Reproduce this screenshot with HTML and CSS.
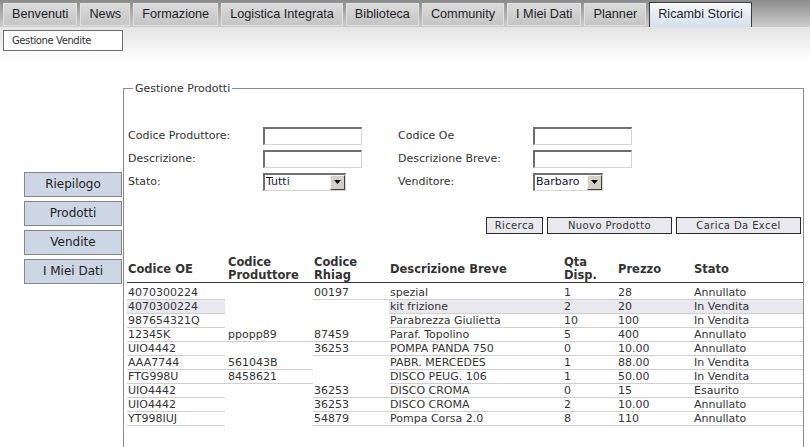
FILE: index.html
```html
<!DOCTYPE html>
<html lang="it">
<head>
<meta charset="utf-8">
<title>Ricambi Storici - Gestione Prodotti</title>
<link rel="stylesheet" href="styles.css">
</head>
<body>
<div class="topbar">
  <ul class="tabs">
    <li class="tab">Benvenuti</li>
    <li class="tab">News</li>
    <li class="tab">Formazione</li>
    <li class="tab">Logistica Integrata</li>
    <li class="tab">Biblioteca</li>
    <li class="tab">Community</li>
    <li class="tab">I Miei Dati</li>
    <li class="tab">Planner</li>
    <li class="tab active">Ricambi Storici</li>
  </ul>
</div>
<div class="subbar">
  <div class="subtab">Gestione Vendite</div>
</div>
<div class="main">
  <nav class="side">
    <div class="sidebtn">Riepilogo</div>
    <div class="sidebtn">Prodotti</div>
    <div class="sidebtn">Vendite</div>
    <div class="sidebtn">I Miei Dati</div>
  </nav>
  <fieldset class="panel">
    <legend class="legend">Gestione Prodotti</legend>
    <table class="form">
      <tr>
        <td class="lbl lbl1">Codice Produttore:</td>
        <td class="fld"><input class="txt" type="text"></td>
        <td class="lbl lbl2">Codice Oe</td>
        <td class="fld"><input class="txt" type="text"></td>
      </tr>
      <tr>
        <td class="lbl lbl1">Descrizione:</td>
        <td class="fld"><input class="txt" type="text"></td>
        <td class="lbl lbl2">Descrizione Breve:</td>
        <td class="fld"><input class="txt" type="text"></td>
      </tr>
      <tr>
        <td class="lbl lbl1">Stato:</td>
        <td class="fld"><span class="sel sel-stato"><span class="sel-val">Tutti</span><span class="sel-btn"><svg width="7" height="4" viewBox="0 0 7 4"><path d="M0 0H7L3.5 4Z" fill="#000"/></svg></span></span></td>
        <td class="lbl lbl2">Venditore:</td>
        <td class="fld"><span class="sel sel-vend"><span class="sel-val">Barbaro</span><span class="sel-btn"><svg width="7" height="4" viewBox="0 0 7 4"><path d="M0 0H7L3.5 4Z" fill="#000"/></svg></span></span></td>
      </tr>
    </table>
    <div class="actions">
      <button class="btn btn-ricerca" type="button">Ricerca</button>
      <button class="btn btn-wide" type="button">Nuovo Prodotto</button>
      <button class="btn btn-wide" type="button">Carica Da Excel</button>
    </div>
    <table class="grid">
      <colgroup>
        <col class="c1"><col class="c2"><col class="c3"><col class="c4"><col class="c5"><col class="c6"><col class="c7">
      </colgroup>
      <thead>
        <tr>
          <th>Codice OE</th>
          <th class="prod">Codice<br>Produttore</th>
          <th>Codice<br>Rhiag</th>
          <th>Descrizione Breve</th>
          <th>Qta<br>Disp.</th>
          <th>Prezzo</th>
          <th>Stato</th>
        </tr>
      </thead>
      <tbody>
        <tr class="first"><td>4070300224</td><td class="prod"></td><td>00197</td><td>spezial</td><td>1</td><td>28</td><td>Annullato</td></tr>
        <tr class="hl"><td>4070300224</td><td class="prod"></td><td></td><td>kit frizione</td><td>2</td><td>20</td><td>In Vendita</td></tr>
        <tr><td>987654321Q</td><td class="prod"></td><td></td><td>Parabrezza Giulietta</td><td>10</td><td>100</td><td>In Vendita</td></tr>
        <tr><td>12345K</td><td class="prod">ppopp89</td><td>87459</td><td>Paraf. Topolino</td><td>5</td><td>400</td><td>Annullato</td></tr>
        <tr><td>UIO4442</td><td class="prod"></td><td>36253</td><td>POMPA PANDA 750</td><td>0</td><td>10.00</td><td>Annullato</td></tr>
        <tr><td>AAA7744</td><td class="prod">561043B</td><td></td><td>PABR. MERCEDES</td><td>1</td><td>88.00</td><td>In Vendita</td></tr>
        <tr><td>FTG998U</td><td class="prod">8458621</td><td></td><td>DISCO PEUG. 106</td><td>1</td><td>50.00</td><td>In Vendita</td></tr>
        <tr><td>UIO4442</td><td class="prod"></td><td>36253</td><td>DISCO CROMA</td><td>0</td><td>15</td><td>Esaurito</td></tr>
        <tr><td>UIO4442</td><td class="prod"></td><td>36253</td><td>DISCO CROMA</td><td>2</td><td>10.00</td><td>Annullato</td></tr>
        <tr><td>YT998IUJ</td><td class="prod"></td><td>54879</td><td>Pompa Corsa 2.0</td><td>8</td><td>110</td><td>Annullato</td></tr>
      </tbody>
    </table>
  </fieldset>
</div>
</body>
</html>
```
FILE: styles.css
```css
html, body {
  margin: 0;
  padding: 0;
  background: #fff;
}
body {
  width: 810px;
  font-family: "DejaVu Sans", Verdana, sans-serif;
  color: #333;
  overflow: hidden;
}

/* top tabs */
.topbar {
  height: 27px;
  background: linear-gradient(#8b8b8b, #cdcdcd);
}
.tabs {
  list-style: none;
  margin: 0;
  padding: 3px 0 0 3px;
  display: flex;
  gap: 3px;
  align-items: flex-start;
}
.tab {
  height: 21px;
  line-height: 21px;
  padding: 0 8px;
  border: 1px solid #e0e0e0;
  background: linear-gradient(#dadada, #c5c5c5);
  font-family: "Liberation Sans", Arial, sans-serif;
  font-size: 12.7px;
  color: #1e1e2a;
  white-space: nowrap;
}
.tab.active {
  margin-top: -1px;
  height: 24px;
  line-height: 23px;
  border-color: #3c3c3c;
  border-bottom: none;
  background: linear-gradient(#f7f8fa, #d5dfeb);
}

/* sub bar */
.subbar {
  height: 33px;
  padding: 3px 0 0 3px;
  box-sizing: border-box;
  background: linear-gradient(#e3e3e3, #ffffff);
}
.subtab {
  width: 120px;
  height: 21px;
  box-sizing: border-box;
  border: 1px solid #6e6e6e;
  background: #fff;
  font-size: 10px;
  letter-spacing: -0.4px;
  line-height: 19px;
  padding-left: 8px;
  color: #333;
}

/* main area */
.main {
  display: flex;
  align-items: flex-start;
  padding-top: 22px;
}
.side {
  width: 123px;
  flex: none;
  padding-top: 90px;
}
.sidebtn {
  margin-left: 24px;
  width: 98px;
  height: 25px;
  box-sizing: border-box;
  margin-bottom: 4px;
  border: 1px solid #858585;
  background: #cdd6e4;
  font-size: 12px;
  line-height: 23px;
  text-align: center;
  color: #222;
}

.panel {
  flex: 1;
  margin: 0 6px 0 0;
  padding: 0 0 40px 3px;
  border: 1px solid #8c8c8c;
  min-width: 0;
}
.legend {
  margin-left: 6px;
  padding: 0 2px;
  font-size: 11px;
  line-height: 13px;
  color: #333;
}

/* search form */
.form {
  border-collapse: collapse;
  margin-top: 29px;
}
.form tr {
  height: 23px;
}
.form td {
  padding: 0;
  height: 23px;
  vertical-align: middle;
}
.form .lbl {
  font-size: 11px;
  color: #333;
  white-space: nowrap;
}
.form .lbl1 {
  width: 135px;
  padding-left: 1px;
}
.form .lbl2 {
  width: 135px;
}
.form .fld {
  width: 135px;
}
.txt {
  display: block;
  width: 99px;
  height: 18px;
  box-sizing: border-box;
  margin: 0;
  padding: 0 2px;
  border-style: solid;
  border-width: 2px 1px 1px 2px;
  border-color: #6f6f6f #d8d5cf #d8d5cf #6f6f6f;
  background: #fff;
  font: 11px "DejaVu Sans", sans-serif;
}
.sel {
  display: flex;
  align-items: center;
  height: 18px;
  box-sizing: border-box;
  border-style: solid;
  border-width: 2px 1px 1px 2px;
  border-color: #6f6f6f #d8d5cf #d8d5cf #6f6f6f;
  background: #fff;
  font-size: 11px;
  color: #1b1330;
}
.sel-stato { width: 83px; }
.sel-vend { width: 70px; }
.sel-val {
  flex: 1;
  padding-left: 1px;
  line-height: 14px;
}
.sel-btn {
  width: 15px;
  height: 15px;
  box-sizing: border-box;
  display: flex;
  align-items: center;
  justify-content: center;
  background: #d4d0c8;
  border-style: solid;
  border-width: 1px;
  border-color: #f4f4f4 #404040 #404040 #f4f4f4;
}

/* action buttons */
.actions {
  display: flex;
  justify-content: flex-end;
  gap: 4px;
  margin-top: 24px;
  padding-right: 2px;
}
.btn {
  height: 17px;
  box-sizing: border-box;
  margin: 0;
  padding: 0;
  border: 1px solid #2a2a2a;
  background: #e8e8ee;
  font-family: "DejaVu Sans", sans-serif;
  font-size: 10px;
  letter-spacing: 0.4px;
  line-height: 15px;
  color: #333;
}
.btn-ricerca { width: 57px; }
.btn-wide { width: 125px; }

/* results grid */
.grid {
  width: 100%;
  margin-top: 22px;
  table-layout: fixed;
  border-collapse: separate;
  border-spacing: 0;
  empty-cells: hide;
  font-size: 11px;
}
.c1 { width: 98px; }
.c2 { width: 88px; }
.c3 { width: 76px; }
.c4 { width: 174px; }
.c5 { width: 54px; }
.c6 { width: 76px; }
.grid th {
  text-align: left;
  font-weight: bold;
  font-size: 11.5px;
  line-height: 13px;
  height: 26px;
  padding: 0 0 0 1px;
  vertical-align: middle;
  border-bottom: 1px solid #333;
  color: #333;
}
.grid td {
  height: 13px;
  line-height: 13px;
  padding: 0 0 0 1px;
  border-bottom: 1px solid #cfcfcf;
  white-space: nowrap;
  color: #333;
}
.grid tr.first td {
  padding-top: 3px;
}
.grid .prod {
  padding-left: 3px;
}
.grid tr.hl td {
  background: #e8e8ee;
}
```
